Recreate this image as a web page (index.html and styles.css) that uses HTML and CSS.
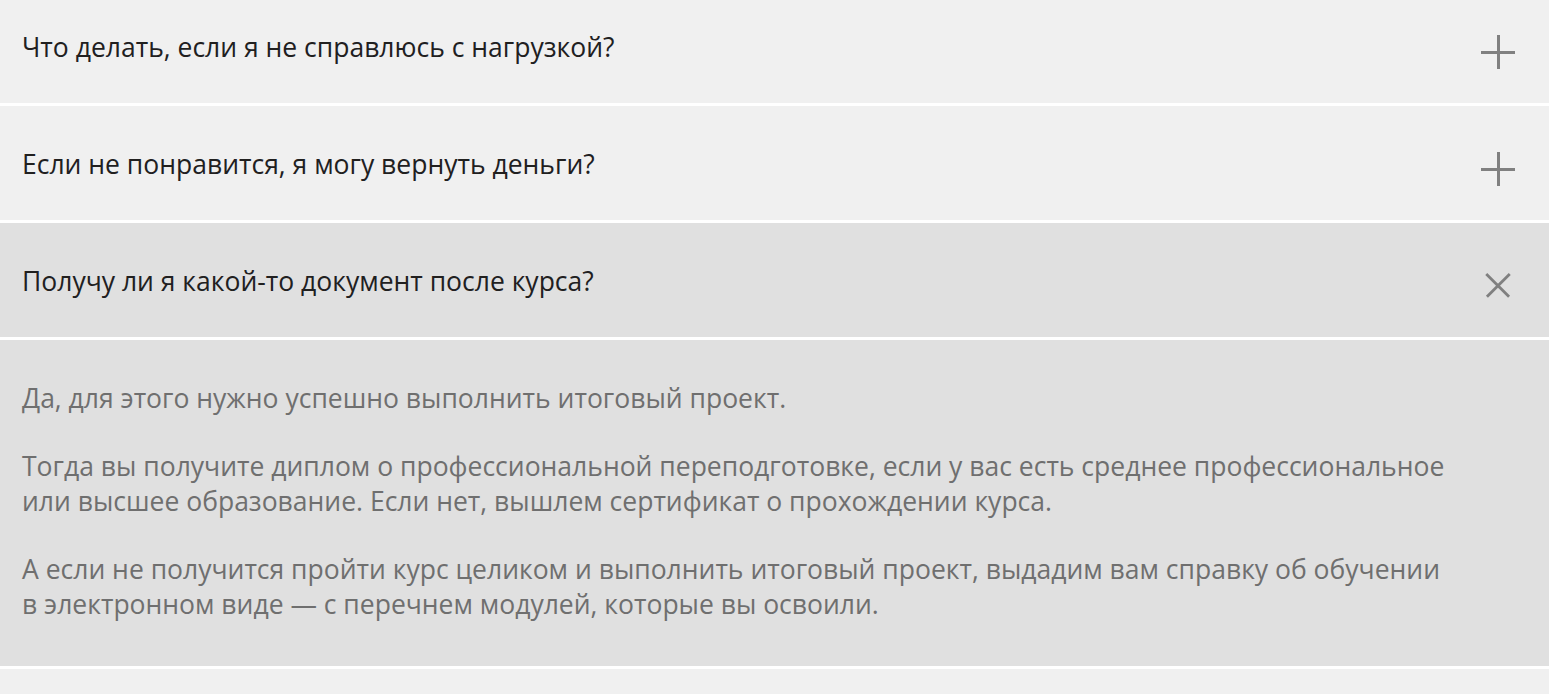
FILE: index.html
```html
<!DOCTYPE html>
<html lang="ru">
<head>
<meta charset="utf-8">
<link rel="stylesheet" href="styles.css">
</head>
<body>
<div class="faq">
  <div class="item first">
    <div class="question">
      <span class="q-text">Что делать, если я не справлюсь с нагрузкой?</span>
      <span class="icon plus"></span>
    </div>
  </div>
  <div class="item">
    <div class="question">
      <span class="q-text">Если не понравится, я могу вернуть деньги?</span>
      <span class="icon plus"></span>
    </div>
  </div>
  <div class="item open">
    <div class="question">
      <span class="q-text">Получу ли я какой-то документ после курса?</span>
      <span class="icon plus close"></span>
    </div>
    <div class="answer">
      <p>Да, для этого нужно успешно выполнить итоговый проект.</p>
      <p>Тогда вы получите диплом о профессиональной переподготовке, если у вас есть среднее профессиональное<br>или высшее образование. Если нет, вышлем сертификат о прохождении курса.</p>
      <p>А если не получится пройти курс целиком и выполнить итоговый проект, выдадим вам справку об обучении<br>в электронном виде — с перечнем модулей, которые вы освоили.</p>
    </div>
  </div>
  <div class="item">
    <div class="question empty"></div>
  </div>
</div>
</body>
</html>
```

FILE: styles.css
```css
html, body {
  margin: 0;
  padding: 0;
  background: #ffffff;
  overflow: hidden;
}

body {
  font-family: "Open Sans", "Liberation Sans", sans-serif;
}

.faq {
  width: 1549px;
  display: flex;
  flex-direction: column;
  gap: 3px;
  margin-top: -11px;
}

.item {
  display: flex;
  flex-direction: column;
  gap: 3px;
}

.question {
  height: 114px;
  background: #f0f0f0;
  display: flex;
  align-items: center;
  justify-content: space-between;
  padding: 0 34px 0 22px;
  box-sizing: border-box;
}

.open .question,
.open .answer {
  background: #e0e0e0;
}

.q-text {
  font-size: 26.5px;
  color: #21201f;
  margin-top: 1px;
}

.icon {
  position: relative;
  width: 34px;
  height: 34px;
  margin-top: 12px;
  flex: none;
}

.icon::before,
.icon::after {
  content: "";
  position: absolute;
  background: #808080;
}

.icon::before {
  left: 0;
  top: 16px;
  width: 34px;
  height: 3px;
}

.icon::after {
  left: 16px;
  top: 0;
  width: 3px;
  height: 34px;
}

.close {
  transform: rotate(45deg) scale(0.95);
  margin-top: 10px;
}

.answer {
  padding: 41px 22px 38px;
  height: 326px;
  box-sizing: border-box;
}

.answer p {
  margin: 0 0 33px;
  font-size: 26.5px;
  line-height: 35px;
  color: #6f6f6f;
}

.answer p:last-child {
  margin-bottom: 0;
}
```
